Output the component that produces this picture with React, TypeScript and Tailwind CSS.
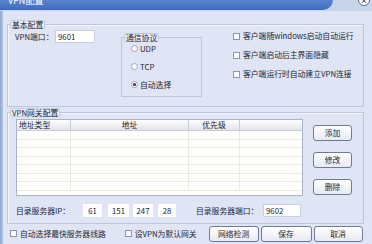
import React from "react";

const font = { fontFamily: '"Noto Sans CJK SC", "Liberation Sans", sans-serif' };

function Checkbox() {
  return <div className="w-[7px] h-[7px] bg-white border border-[#8d97ab] shrink-0" />;
}

function Radio({ checked }: { checked?: boolean }) {
  return (
    <div className="w-[7px] h-[7px] rounded-full bg-white border border-[#9aa3b5] shrink-0 flex items-center justify-center">
      {checked && <div className="w-[3px] h-[3px] rounded-full bg-[#2c3440]" />}
    </div>
  );
}

function Btn({ label, w }: { label: string; w: string }) {
  return (
    <div
      className={`${w} h-[16px] rounded-[3px] border border-[#6f7b92] bg-gradient-to-b from-white to-[#e6eaf3] flex items-center justify-center text-[#1d2533]`}
    >
      {label}
    </div>
  );
}

function Legend({ text }: { text: string }) {
  return (
    <div className="absolute left-[2px] top-[-5px] h-[9px] px-[1px] flex items-center bg-[#e8edf8] border border-[#c3cbe0] rounded-[2px] leading-none text-[#1d2533]">
      {text}
    </div>
  );
}

export default function App() {
  const rows = [0, 1, 2, 3, 4, 5, 6];
  return (
    <div
      className="w-[372px] h-[244px] overflow-hidden bg-[#dfe5f4] flex flex-col text-[7.8px] leading-none text-[#1d2533]"
      style={font}
    >
      {/* title bar */}
      <div className="h-[11px] flex shrink-0 bg-[#c9d4eb]">
        <div className="flex-1 h-[10px] bg-gradient-to-b from-[#5b85d0] to-[#3d6bc0] rounded-br-[12px] overflow-hidden">
          <div className="mt-[-4px] ml-[8px] text-white text-[9px] leading-none">VPN配置</div>
        </div>
        <div className="w-[39px] flex justify-end pr-[2px]">
          <div className="w-[12px] h-[12px] mt-[-6px] rounded-full bg-white border border-[#5a6a8a] flex items-end justify-center text-[7px] font-bold text-[#333] pb-[1px]">
            ×
          </div>
        </div>
      </div>
      <div className="flex flex-1">
        <div className="w-[3px] bg-gradient-to-r from-[#8ea6d6] to-[#b7c6e6] shrink-0" />
        <div className="flex flex-col pl-[4px] pt-[13px]">
          {/* 基本配置 */}
          <div className="relative w-[357px] h-[83px] border border-[#bcc6dd] shadow-[inset_1px_1px_0_#f4f6fb]">
            <Legend text="基本配置" />
            <div className="flex pl-[7px] pt-[5px]">
              <div className="flex items-center h-[13px]">
                <div className="w-[40px]">VPN端口：</div>
                <div className="w-[40px] h-[13px] bg-white border border-[#c8cfdf] flex items-center pl-[2px]">9601</div>
              </div>
              <div className="relative ml-[26px] mt-[7px] w-[81px] h-[60px] border border-[#bcc6dd]">
                <Legend text="通信协议" />
                <div className="flex flex-col gap-[9px] pl-[9px] pt-[6px]">
                  <div className="flex items-center gap-[2px] h-[9px]">
                    <Radio />
                    <span>UDP</span>
                  </div>
                  <div className="flex items-center gap-[2px] h-[9px]">
                    <Radio />
                    <span>TCP</span>
                  </div>
                  <div className="flex items-center gap-[2px] h-[9px]">
                    <Radio checked />
                    <span>自动选择</span>
                  </div>
                </div>
              </div>
              <div className="ml-[31px] mt-[2px] flex flex-col gap-[11px]">
                <div className="flex items-center gap-[3px] h-[8px]">
                  <Checkbox />
                  <span>客户端随windows启动自动运行</span>
                </div>
                <div className="flex items-center gap-[3px] h-[8px]">
                  <Checkbox />
                  <span>客户端启动后主界面隐藏</span>
                </div>
                <div className="flex items-center gap-[3px] h-[8px]">
                  <Checkbox />
                  <span>客户端运行时自动建立VPN连接</span>
                </div>
              </div>
            </div>
          </div>

          {/* VPN网关配置 */}
          <div className="relative mt-[5px] w-[357px] h-[112px] border border-[#bcc6dd] shadow-[inset_1px_1px_0_#f4f6fb]">
            <Legend text="VPN网关配置" />
            <div className="flex pl-[8px] pt-[6px]">
              <div className="w-[287px] h-[77px] bg-white border border-[#a9b3c6] flex flex-col overflow-hidden">
                <div className="h-[11px] flex shrink-0 bg-gradient-to-b from-white to-[#e2e4ea] border-b border-[#c9cdd6]">
                  <div className="w-[54px] border-r border-[#c9cdd6] flex items-center pl-[2px]">地址类型</div>
                  <div className="w-[118px] border-r border-[#c9cdd6] flex items-center justify-center">地址</div>
                  <div className="w-[51px] border-r border-[#c9cdd6] flex items-center justify-center">优先级</div>
                  <div className="flex-1" />
                </div>
                {rows.map((r) => (
                  <div key={r} className="h-[8.5px] flex shrink-0 border-b border-[#efeadb]">
                    <div className="w-[54px] border-r border-[#efeadb]" />
                    <div className="w-[118px] border-r border-[#efeadb]" />
                    <div className="w-[51px] border-r border-[#efeadb]" />
                    <div className="flex-1" />
                  </div>
                ))}
              </div>
              <div className="ml-[10px] mt-[6px] flex flex-col gap-[11px]">
                <Btn label="添加" w="w-[39px]" />
                <Btn label="修改" w="w-[39px]" />
                <Btn label="删除" w="w-[39px]" />
              </div>
            </div>
            <div className="flex items-center pl-[8px] mt-[8px] h-[13px]">
              <div className="w-[67px]">目录服务器IP：</div>
              <div className="w-[19px] h-[13px] bg-white flex items-center justify-center">61</div>
              <div className="w-[21px] h-[13px] bg-white flex items-center justify-center ml-[6px]">151</div>
              <div className="w-[20px] h-[13px] bg-white flex items-center justify-center ml-[4px]">247</div>
              <div className="w-[18px] h-[13px] bg-white flex items-center justify-center ml-[5px]">28</div>
              <div className="ml-[20px] w-[67px]">目录服务器端口：</div>
              <div className="w-[38px] h-[13px] bg-white border border-[#c8cfdf] flex items-center pl-[2px]">9602</div>
            </div>
          </div>

          {/* bottom row */}
          <div className="flex items-center h-[18px] mt-[1px]">
            <div className="ml-[3px] flex items-center gap-[3px]">
              <Checkbox />
              <span>自动选择最快服务器线路</span>
            </div>
            <div className="ml-[19px] flex items-center gap-[3px]">
              <Checkbox />
              <span>设VPN为默认网关</span>
            </div>
            <div className="ml-[12px] flex gap-[2px]">
              <Btn label="网络检测" w="w-[50px]" />
              <Btn label="保存" w="w-[51px]" />
              <Btn label="取消" w="w-[49px]" />
            </div>
          </div>
        </div>
      </div>
    </div>
  );
}
